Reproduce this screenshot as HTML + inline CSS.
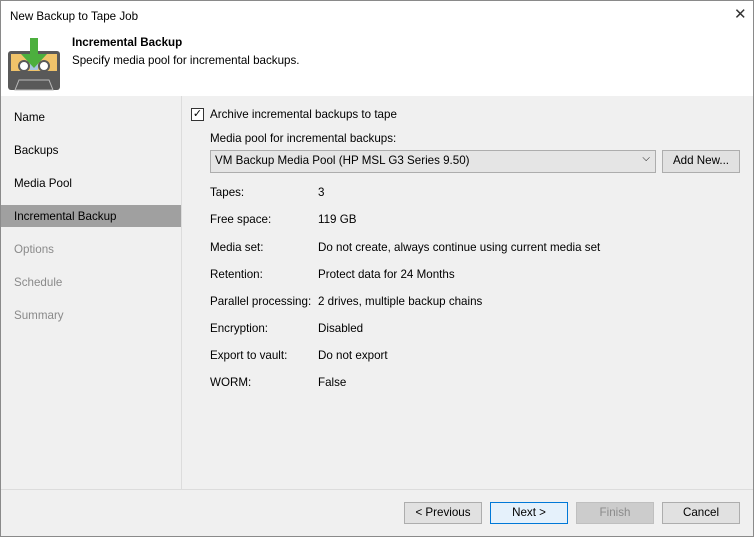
<!DOCTYPE html><html><head><style>
body{margin:0;width:754px;height:537px;overflow:hidden;font-family:"Liberation Sans",sans-serif;font-size:11.6px;color:#000;background:#f0f0f0;position:relative}
.win{position:absolute;left:0;top:0;width:752px;height:535px;border:1px solid #8a8a8a;background:#f0f0f0}
.hdr{position:absolute;left:0;top:0;width:752px;height:95px;background:#fff}
.a{position:absolute;white-space:nowrap}
.nav{position:absolute;left:0;top:95px;width:180px;height:393px;border-right:1px solid #dcdcdc}
.sel{position:absolute;left:0;top:204px;width:180px;height:22px;background:#a0a0a0}
.btn{position:absolute;top:501px;width:76px;height:20px;border:1px solid #adadad;background:#e1e1e1;text-align:center;line-height:20px}
</style></head><body><div class="win">
<div class="hdr">
<div class="a" style="left:9px;top:9px">New Backup to Tape Job</div>
<div class="a" style="left:733px;top:4px;font-size:15px;color:#333">✕</div>
<svg class="a" style="left:7px;top:36px" width="54" height="54" viewBox="0 0 54 54">
<rect x="0" y="14" width="52" height="39" rx="3" fill="#595959"/>
<path d="M3 17h46v17H3z" fill="#f0c36a"/>
<circle cx="16" cy="29" r="5" fill="#fff" stroke="#595959" stroke-width="2"/><circle cx="36" cy="29" r="5" fill="#fff" stroke="#595959" stroke-width="2"/>
<rect x="22" y="26" width="8" height="7" fill="#a7c6e0"/>
<path d="M7 53l4-10h30l4 10z" fill="#595959" stroke="#bbb" stroke-width="1"/>
<path d="M22 1h8v16h9l-13 14-13-14h9z" fill="#4caf3e"/>
</svg>
<div class="a" style="left:71px;top:35px;font-weight:bold">Incremental Backup</div>
<div class="a" style="left:71px;top:53px">Specify media pool for incremental backups.</div>
</div>
<div class="nav"></div>
<div class="sel"></div>
<div class="a" style="left:13px;top:110px">Name</div>
<div class="a" style="left:13px;top:143px">Backups</div>
<div class="a" style="left:13px;top:176px">Media Pool</div>
<div class="a" style="left:13px;top:209px">Incremental Backup</div>
<div class="a" style="left:13px;top:242px;color:#8a8a8a">Options</div>
<div class="a" style="left:13px;top:275px;color:#8a8a8a">Schedule</div>
<div class="a" style="left:13px;top:308px;color:#8a8a8a">Summary</div>
<div class="a" style="left:190px;top:107px;width:11px;height:11px;border:1px solid #333;background:#fff;font-size:11px;line-height:11px;text-align:center">✓</div>
<div class="a" style="left:209px;top:107px">Archive incremental backups to tape</div>
<div class="a" style="left:209px;top:131px">Media pool for incremental backups:</div>
<div class="a" style="left:209px;top:149px;width:444px;height:21px;border:1px solid #adadad;background:#e5e5e5"><span class="a" style="left:4px;top:3px">VM Backup Media Pool (HP MSL G3 Series 9.50)</span><span class="a" style="right:5px;top:2px;font-size:10px">⌵</span></div>
<div class="btn" style="left:661px;top:149px;height:21px">Add New...</div>
<div class="a" style="left:209px;top:185px">Tapes:</div><div class="a" style="left:317px;top:185px">3</div>
<div class="a" style="left:209px;top:212px">Free space:</div><div class="a" style="left:317px;top:212px">119 GB</div>
<div class="a" style="left:209px;top:240px">Media set:</div><div class="a" style="left:317px;top:240px">Do not create, always continue using current media set</div>
<div class="a" style="left:209px;top:267px">Retention:</div><div class="a" style="left:317px;top:267px">Protect data for 24 Months</div>
<div class="a" style="left:209px;top:294px">Parallel processing:</div><div class="a" style="left:317px;top:294px">2 drives, multiple backup chains</div>
<div class="a" style="left:209px;top:321px">Encryption:</div><div class="a" style="left:317px;top:321px">Disabled</div>
<div class="a" style="left:209px;top:348px">Export to vault:</div><div class="a" style="left:317px;top:348px">Do not export</div>
<div class="a" style="left:209px;top:375px">WORM:</div><div class="a" style="left:317px;top:375px">False</div>
<div class="a" style="left:0;top:488px;width:752px;height:1px;background:#dcdcdc"></div>
<div class="btn" style="left:403px">&lt; Previous</div>
<div class="btn" style="left:489px;border-color:#0078d7;background:#e5f1fb">Next &gt;</div>
<div class="btn" style="left:575px;background:#cccccc;border-color:#bfbfbf;color:#8a8a8a">Finish</div>
<div class="btn" style="left:661px">Cancel</div>
</div></body></html>
